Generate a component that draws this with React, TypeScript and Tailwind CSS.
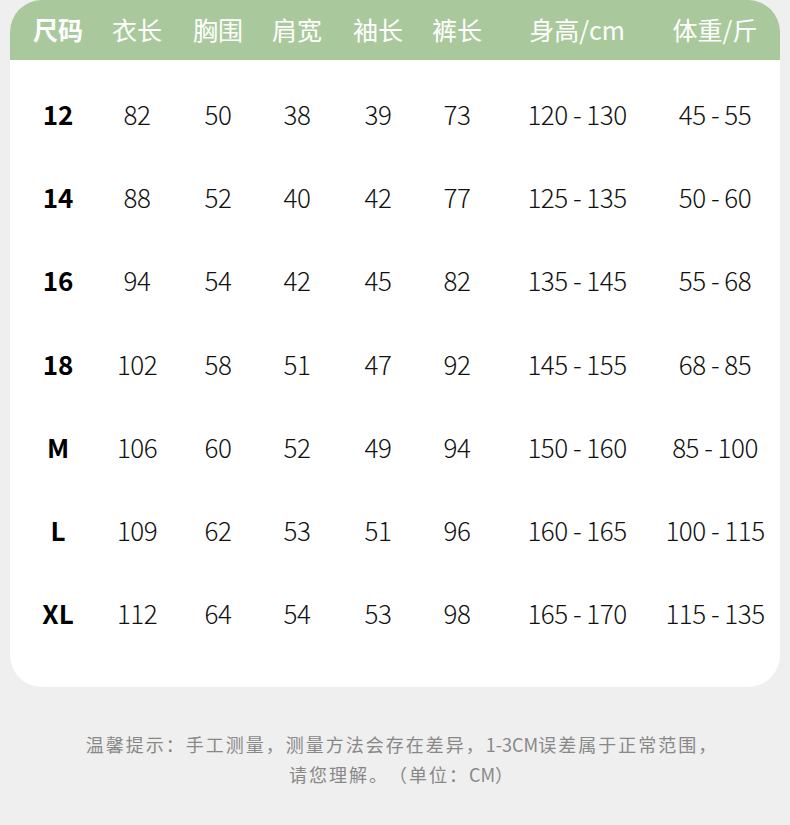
const headers = ["尺码", "衣长", "胸围", "肩宽", "袖长", "裤长", "身高/cm", "体重/斤"];

const rows = [
  ["12", "82", "50", "38", "39", "73", "120 - 130", "45 - 55"],
  ["14", "88", "52", "40", "42", "77", "125 - 135", "50 - 60"],
  ["16", "94", "54", "42", "45", "82", "135 - 145", "55 - 68"],
  ["18", "102", "58", "51", "47", "92", "145 - 155", "68 - 85"],
  ["M", "106", "60", "52", "49", "94", "150 - 160", "85 - 100"],
  ["L", "109", "62", "53", "51", "96", "160 - 165", "100 - 115"],
  ["XL", "112", "64", "54", "53", "98", "165 - 170", "115 - 135"]
];

const cols = "grid grid-cols-[80px_78px_84px_74px_88px_70px_170px_106px] pl-[8px]";

export default function App() {
  return (
    <div
      className="min-h-screen w-[790px] bg-[#efefef] pt-0"
      style={{ fontFamily: '"Noto Sans CJK SC", "Noto Sans", sans-serif' }}
    >
      <div className="mx-[10px] w-[770px] overflow-hidden rounded-[32px] bg-white">
        <div className={`${cols} h-[60px] items-center bg-[#a9c99c] text-[25px] text-white`}>
          {headers.map((h, i) => (
            <div key={h} className={i === 0 ? "text-center font-bold" : "text-center"}>
              {h}
            </div>
          ))}
        </div>
        <div className="pt-[12px] pb-[33px]">
          {rows.map((r) => (
            <div key={r[0]} className={`${cols} h-[83.2px] items-center text-[26px] text-[#111]`}>
              {r.map((v, i) => (
                <div
                  key={i}
                  className={
                    i === 0
                      ? "text-center font-bold text-black"
                      : "text-center font-light tracking-[-0.5px]"
                  }
                >
                  {v}
                </div>
              ))}
            </div>
          ))}
        </div>
      </div>
      <div className="mt-[42px] pl-[14px] text-center text-[18px] leading-[30px] tracking-[2px] text-[#888] [text-spacing-trim:space-all]">
        <p>温馨提示：手工测量，测量方法会存在差异，<span className="tracking-[0px]">1-3CM</span>误差属于正常范围，</p>
        <p>请您理解。（单位：<span className="tracking-[0px]">CM</span>）</p>
      </div>
    </div>
  );
}
